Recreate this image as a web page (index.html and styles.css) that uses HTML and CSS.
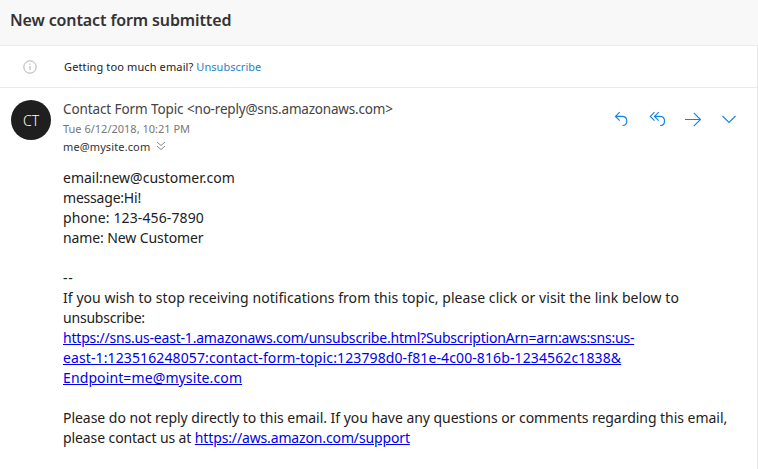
FILE: index.html
```
<!DOCTYPE html>
<html lang="en">
<head>
<meta charset="utf-8">
<title>New contact form submitted</title>
<link rel="stylesheet" href="styles.css">
</head>
<body>
<main class="pane">
  <header class="subject"><h1>New contact form submitted</h1></header>
  <div class="reading">
  <div class="notice">
    <svg class="info" width="14" height="14" viewBox="0 0 14 14"><circle cx="7" cy="7" r="6.200"/><path d="M7 6v4.200M7 3.600v1.200"/></svg>
    <p><span class="question">Getting too much email?</span> <a href="#">Unsubscribe</a></p>
  </div>
  <article class="message">
    <div class="avatar">CT</div>
    <div class="content">
      <div class="top">
        <div class="meta">
          <div class="from"><span class="name">Contact Form Topic</span> <span class="address">&lt;no-reply@sns.amazonaws.com&gt;</span></div>
          <div class="date">Tue 6/12/2018, 10:21 PM</div>
          <div class="to">me@mysite.com <svg width="10" height="10" viewBox="0 0 10 10"><path d="M1 1l4 3.500L9 1M1 5l4 3.500L9 5"/></svg></div>
        </div>
        <div class="actions">
          <svg width="16" height="16" viewBox="0 0 16 16"><path d="M6.700 1.200L2.500 5.400l4.200 4.200M2.500 5.400H9c3 0 4.800 2 4.800 4.600S12 14.500 9.500 14.500"/></svg>
          <svg width="16" height="16" viewBox="0 0 16 16"><path d="M5.500 1.200L1.300 5.400l4.200 4.200M9.700 1.200L5.500 5.400l4.200 4.200M5.500 5.400h5.200c3 0 4.800 2 4.800 4.600s-1.800 4.500-4.300 4.500"/></svg>
          <svg width="16" height="16" viewBox="0 0 16 16"><path d="M0 8.500h15.500M8.800 1.800l6.700 6.700-6.700 6.700"/></svg>
          <svg width="16" height="16" viewBox="0 0 16 16"><path d="M1.500 5L8 11.500 14.500 5"/></svg>
        </div>
      </div>
      <div class="body">
        <div>email:new@customer.com</div>
        <div class="tight">message:Hi!</div>
        <div class="loose">phone: 123-456-7890</div>
        <div class="snug">name: New Customer</div>
        <br>
        <div class="dashes">--</div>
        <div class="notice-line">If you wish to stop receiving notifications from this topic, please click or visit the link below to</div>
        <div class="tight">unsubscribe:</div>
        <a href="#"><span class="tight">https://sns.us-east-1.amazonaws.com/unsubscribe.html?SubscriptionArn=arn:aws:sns:us-</span><br><span class="loose">east-1:123516248057:contact-form-topic:123798d0-f81e-4c00-816b-1234562c1838&amp;</span><br><span class="loose">Endpoint=me@mysite.com</span></a><br><br>
        <div class="closing">Please do not reply directly to this email. If you have any questions or comments regarding this email,</div>
        <div class="snug">please contact us at <a class="support" href="#">https://aws.amazon.com/support</a></div>
      </div>
    </div>
  </article>
  </div>
</main>
</body>
</html>
```
FILE: styles.css
```
* { box-sizing: border-box; }
body { margin: 0; font-family: "Noto Sans", sans-serif; color: #212121; background: #fff; overflow: hidden; }
h1, p { margin: 0; }
.pane { height: 469px; }
.subject { height: 45px; background: #f8f8f8; padding: 8px 10px; }
h1 { font-size: 16px; line-height: 24px; font-weight: 600; letter-spacing: -.12px; color: #333; white-space: nowrap; }
.reading { height: 424px; border-top: 1px solid #eaeaea; border-right: 1px solid #eaeaea; }
.notice { height: 42px; border-bottom: 1px solid #eaeaea; display: flex; align-items: center; padding-left: 23px; gap: 27px; font-size: 11px; }
.notice a { color: #2b7fcb; text-decoration: none; letter-spacing: .04px; }
.question { letter-spacing: .12px; }
.info { fill: none; stroke: #b0b0b0; stroke-width: 1; }
.message { display: flex; padding: 12px 0 0 11px; gap: 12px; }
.avatar { width: 40px; height: 40px; border-radius: 50%; background: #1f1f1f; color: #fff; font-size: 14px; font-weight: 300; line-height: 42px; text-align: center; flex: none; }
.content { flex: 1; white-space: nowrap; }
.top { display: flex; justify-content: space-between; }
.meta { margin-top: -1px; }
.from { font-size: 13.5px; line-height: 20px; color: #444; }
.name { letter-spacing: -.1px; }
.address { letter-spacing: -.19px; }
.date { font-size: 11px; line-height: 19px; color: #777; }
.to { font-size: 11px; line-height: 17px; color: #333; letter-spacing: .12px; display: flex; align-items: center; gap: 6px; }
.to svg { fill: none; stroke: #888; position: relative; top: -1px; }
.actions { display: flex; gap: 20px; padding: 11px 20px 0 0; }
.actions svg { fill: none; stroke: #1683dc; stroke-width: 1.15; }
.body { font-size: 14px; line-height: 20px; padding-top: 13px; }
.body a { color: #0000ee; }
.tight { letter-spacing: -.205px; }
.snug { letter-spacing: -.1px; }
.loose { letter-spacing: .115px; }
.dashes { letter-spacing: .8px; }
.notice-line { letter-spacing: .06px; }
.closing { letter-spacing: -.035px; }
.support { letter-spacing: -.14px; }
```
